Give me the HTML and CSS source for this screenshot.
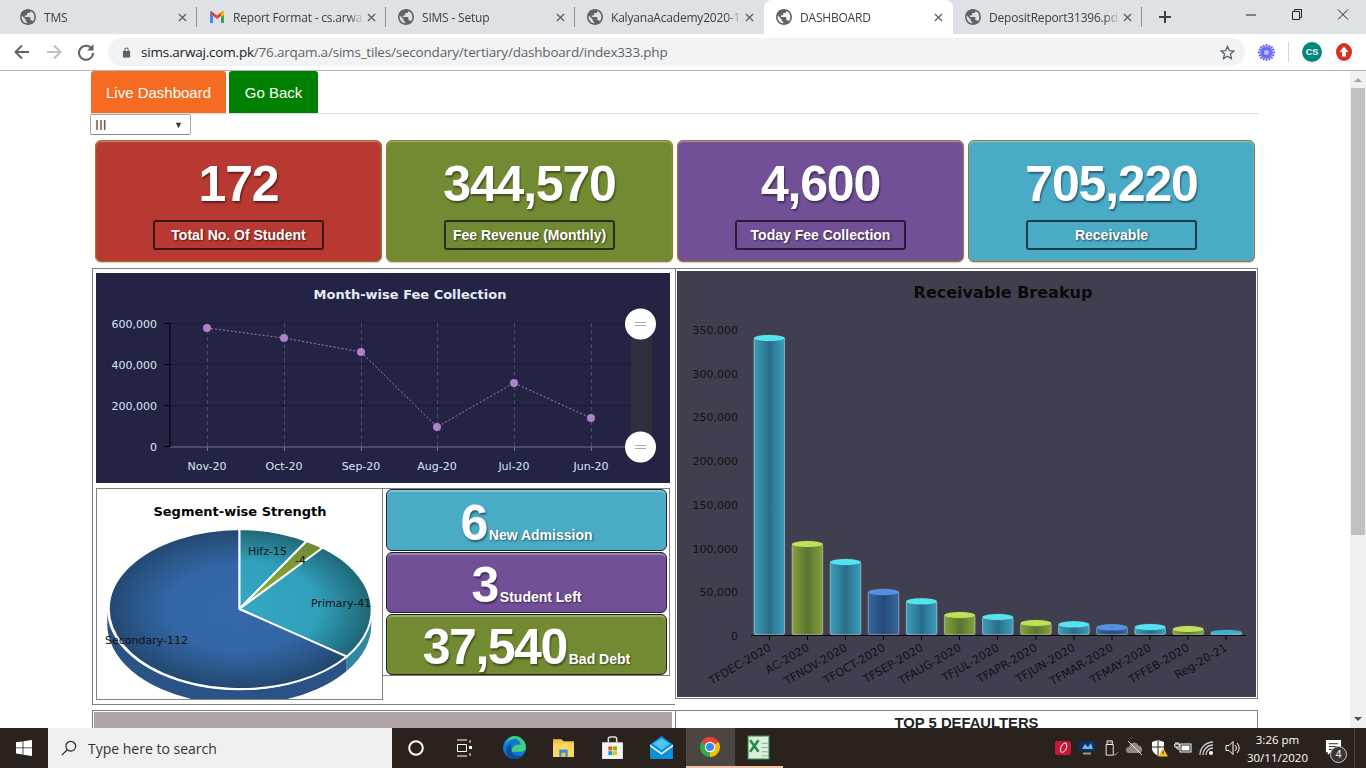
FILE: index.html
```html
<!DOCTYPE html>
<html lang="en">
<head>
<meta charset="utf-8">
<title>DASHBOARD</title>
<link rel="stylesheet" href="styles.css">
</head>
<body>
<svg class="defs" width="0" height="0" aria-hidden="true">
  <defs>
    <symbol id="globe" viewBox="2 2 20 20"><path fill="#5f6368" d="M12 2C6.48 2 2 6.48 2 12s4.48 10 10 10 10-4.48 10-10S17.52 2 12 2zm-1 17.93c-3.95-.49-7-3.85-7-7.93 0-.62.08-1.21.21-1.79L9 15v1c0 1.1.9 2 2 2v1.93zm6.9-2.54c-.26-.81-1-1.39-1.9-1.39h-1v-3c0-.55-.45-1-1-1H8v-2h2c.55 0 1-.45 1-1V7h2c1.1 0 2-.9 2-2v-.41c2.93 1.19 5 4.06 5 7.41 0 2.08-.8 3.97-2.1 5.39z"/></symbol>
    <symbol id="close" viewBox="0 0 10 10"><path d="M1 1l8 8M9 1l-8 8" stroke="#5f6368" stroke-width="1.5" fill="none"/></symbol>
    <linearGradient id="tealBar" x1="0" x2="1" y1="0" y2="0"><stop offset="0" stop-color="#3b9fbb"/><stop offset=".5" stop-color="#2a6d88"/><stop offset="1" stop-color="#3b9fbb"/></linearGradient>
    <linearGradient id="greenBar" x1="0" x2="1" y1="0" y2="0"><stop offset="0" stop-color="#85a23c"/><stop offset=".5" stop-color="#5c7230"/><stop offset="1" stop-color="#85a23c"/></linearGradient>
    <linearGradient id="blueBar" x1="0" x2="1" y1="0" y2="0"><stop offset="0" stop-color="#37689f"/><stop offset=".5" stop-color="#244a7a"/><stop offset="1" stop-color="#37689f"/></linearGradient>
    <radialGradient id="bluePie" gradientUnits="userSpaceOnUse" cx="239" cy="609" r="132" gradientTransform="translate(0 243) scale(1 .6)"><stop offset="0" stop-color="#3568a8"/><stop offset=".55" stop-color="#3366a5"/><stop offset="1" stop-color="#234870"/></radialGradient>
    <radialGradient id="tealPie" gradientUnits="userSpaceOnUse" cx="239" cy="609" r="132" gradientTransform="translate(0 243) scale(1 .6)"><stop offset="0" stop-color="#34a8c4"/><stop offset=".6" stop-color="#30a0bb"/><stop offset="1" stop-color="#1f6675"/></radialGradient>
    <radialGradient id="greenPie" gradientUnits="userSpaceOnUse" cx="239" cy="609" r="132" gradientTransform="translate(0 243) scale(1 .6)"><stop offset="0" stop-color="#95b53e"/><stop offset="1" stop-color="#6f8a30"/></radialGradient>
  </defs>
</svg>

<header class="chrome">
  <div class="tabstrip">
    <div class="tab"><svg class="fav"><use href="#globe"/></svg><span class="tab-title">TMS</span><svg class="tab-x"><use href="#close"/></svg></div>
    <div class="tab"><svg class="fav" viewBox="0 0 16 16"><path d="M1 3v11h3V7l4 3 4-3v7h3V3l-1.500-1L8 6.500 2.500 2z" fill="#ea4335"/><path d="M1 3.500V14h3V6z" fill="#4285f4"/><path d="M12 6v8h3V3.500z" fill="#34a853"/><path d="M15 3.500V6l-3 2V4l1.500-2z" fill="#fbbc04"/></svg><span class="tab-title">Report Format - cs.arwa</span><svg class="tab-x"><use href="#close"/></svg></div>
    <div class="tab"><svg class="fav"><use href="#globe"/></svg><span class="tab-title">SIMS - Setup</span><svg class="tab-x"><use href="#close"/></svg></div>
    <div class="tab tab-before-active"><svg class="fav"><use href="#globe"/></svg><span class="tab-title">KalyanaAcademy2020-1</span><svg class="tab-x"><use href="#close"/></svg></div>
    <div class="tab tab-active"><svg class="fav"><use href="#globe"/></svg><span class="tab-title">DASHBOARD</span><svg class="tab-x"><use href="#close"/></svg></div>
    <div class="tab"><svg class="fav"><use href="#globe"/></svg><span class="tab-title">DepositReport31396.pd</span><svg class="tab-x"><use href="#close"/></svg></div>
    <svg class="newtab" viewBox="0 0 12 12"><path d="M6 0v12M0 6h12" stroke="#3c4043" stroke-width="2"/></svg>
    <div class="winctl">
      <svg viewBox="0 0 46 30" class="winbtn"><path d="M18 15h10" stroke="#222" stroke-width="1"/></svg>
      <svg viewBox="0 0 46 30" class="winbtn"><path d="M18.500 11.500h7v8h-7zM20.500 11.500v-2h7v8h-2" stroke="#222" fill="none"/></svg>
      <svg viewBox="0 0 46 30" class="winbtn"><path d="M18 9.500l10 10M28 9.500l-10 10" stroke="#222" fill="none"/></svg>
    </div>
  </div>
  <div class="toolbar">
    <svg class="nav-ico" viewBox="0 0 32 34"><path d="M23 17H10M16 10.500L9.500 17l6.500 6.500" stroke="#5f6368" stroke-width="2" fill="none"/></svg>
    <svg class="nav-ico" viewBox="0 0 32 34"><path d="M9 17h13M16 10.500l6.500 6.500-6.500 6.500" stroke="#bdc1c6" stroke-width="2" fill="none"/></svg>
    <svg class="nav-ico nav-reload" viewBox="0 0 32 34"><path d="M21.500 13.500A7 7 0 1 0 23 18" stroke="#5f6368" stroke-width="2" fill="none"/><path d="M23.500 9v6.500H17z" fill="#5f6368"/></svg>
    <div class="omnibox">
      <svg class="lock" viewBox="0 0 10 12"><path d="M2.500 5V3.500a2.500 2.500 0 0 1 5 0V5h1.500v7H1V5zM3.700 5h2.600V3.500a1.300 1.300 0 0 0-2.600 0z" fill="#5f6368"/></svg>
      <span class="url"><span class="url-host">sims.arwaj.com.pk</span>/76.arqam.a/sims_tiles/secondary/tertiary/dashboard/index333.php</span>
      <svg class="star" viewBox="0 0 16 16"><path d="M8 1.500l2 4.500 4.800.5-3.600 3.200 1 4.800L8 12l-4.200 2.500 1-4.800L1.200 6.500 6 6z" stroke="#5f6368" stroke-width="1.400" fill="none"/></svg>
    </div>
    <svg class="ext" viewBox="0 0 18 18"><g stroke="#6a6cf5" stroke-width="2"><path d="M9 0v18M0 9h18M2.600 2.600l12.800 12.800M15.400 2.600L2.600 15.400M5.500 .8l7 16.400M12.500 .8l-7 16.400M.8 5.500l16.400 7M.8 12.500l16.400-7"/></g><circle cx="9" cy="9" r="2.500" fill="#fff"/><circle cx="9" cy="9" r="2.500" fill="#8a8cf8" opacity=".6"/></svg>
    <span class="tb-sep"></span>
    <span class="avatar">CS</span>
    <svg class="upd" viewBox="0 0 16 18"><ellipse cx="8" cy="9" rx="8" ry="9" fill="#d93025"/><path d="M8 3.500L12.500 9H10v4.500H6V9H3.500z" fill="#fff"/></svg>
  </div>
</header>

<div class="viewport">
  <main class="content">
    <nav class="navtabs">
      <a class="navtab navtab-live">Live Dashboard</a>
      <a class="navtab navtab-back">Go Back</a>
    </nav>
    <div class="selectbox"><span class="select-value">III</span><span class="select-arrow">▼</span></div>

    <section class="cards">
      <div class="card card-red"><div class="card-num">172</div><div class="card-label">Total No. Of Student</div></div>
      <div class="card card-green"><div class="card-num">344,570</div><div class="card-label">Fee Revenue (Monthly)</div></div>
      <div class="card card-purple"><div class="card-num">4,600</div><div class="card-label">Today Fee Collection</div></div>
      <div class="card card-teal"><div class="card-num">705,220</div><div class="card-label">Receivable</div></div>
    </section>

    <section class="grid-main">
      <div class="left-box">
        <div class="line-chart">
          <svg class="fill-svg chart-text" viewBox="96 273 574 210">
            <text x="410" y="299" text-anchor="middle" class="t-title-light">Month-wise Fee Collection</text>
            <g stroke="#1b1b38"><path d="M170 323.500H631M170 364.500H631M170 405.500H631"/></g>
            <g stroke="#4b4b62" stroke-dasharray="4 3"><path d="M207.500 323V447M284.500 323V447M361.500 323V447M437.500 323V447M514.500 323V447M591.500 323V447"/></g>
            <rect x="631" y="323" width="21" height="124" fill="#2f2f40"/>
            <path d="M170 447H631" stroke="#77778a"/>
            <path d="M170 323V447M164 323.500H170M164 364.500H170M164 405.500H170M164 446.500H170" stroke="#000" fill="none"/>
            <path d="M207.500 447v4M284.500 447v4M361.500 447v4M437.500 447v4M514.500 447v4M591.500 447v4" stroke="#77778a"/>
            <g class="t-light" text-anchor="end">
              <text x="157" y="328">600,000</text><text x="157" y="369">400,000</text><text x="157" y="410">200,000</text><text x="157" y="451">0</text>
            </g>
            <g class="t-light" text-anchor="middle">
              <text x="207" y="470">Nov-20</text><text x="284" y="470">Oct-20</text><text x="361" y="470">Sep-20</text><text x="437" y="470">Aug-20</text><text x="514" y="470">Jul-20</text><text x="591" y="470">Jun-20</text>
            </g>
            <path d="M207 328L284 338L361 352L437 427L514 383L591 418" stroke="#a67cc0" stroke-dasharray="2 2" fill="none"/>
            <g fill="#ad82c8"><circle cx="207" cy="328" r="4"/><circle cx="284" cy="338" r="4"/><circle cx="361" cy="352" r="4"/><circle cx="437" cy="427" r="4"/><circle cx="514" cy="383" r="4"/><circle cx="591" cy="418" r="4"/></g>
            <g><circle cx="640.500" cy="324" r="15.500" fill="#fff"/><path d="M635 322.500h11M635 325.500h11" stroke="#aaa"/><circle cx="640.500" cy="447" r="15.500" fill="#fff"/><path d="M635 445.500h11M635 448.500h11" stroke="#aaa"/></g>
          </svg>
        </div>
        <div class="lower-row">
          <div class="pie-box">
            <svg class="fill-svg chart-text" viewBox="97 489 285 210">
              <path d="M107.300 609 A132 80 0 0 0 346.700 656.700 L346.700 671 A132 80 0 0 1 107.300 623Z" fill="#2a5285"/>
              <path d="M346.700 656.700 A132 80 0 0 0 371.300 609 L371.300 623 A132 80 0 0 1 346.700 671Z" fill="#2f87a0"/>
              <g stroke="#fff" stroke-width="2" stroke-linejoin="round">
                <path d="M239.300 609 L239.300 529 A132 80 0 0 1 306.700 541Z" fill="url(#tealPie)"/>
                <path d="M239.300 609 L306.700 541 A132 80 0 0 1 322.700 547.700Z" fill="url(#greenPie)"/>
                <path d="M239.300 609 L322.700 547.700 A132 80 0 0 1 346.700 656.700Z" fill="url(#tealPie)"/>
                <path d="M239.300 609 L346.700 656.700 A132 80 0 1 1 239.300 529Z" fill="url(#bluePie)"/>
              </g>
              <text x="240" y="516" text-anchor="middle" class="t-title-dark">Segment-wise Strength</text>
              <g class="t-dark">
                <text x="248" y="555">Hifz-15</text><text x="295" y="564">-4</text><text x="311" y="607">Primary-41</text><text x="105" y="644">Secondary-112</text>
              </g>
            </svg>
          </div>
          <div class="kpi-box">
            <div class="kpi kpi-teal"><span class="kpi-num">6</span><span class="kpi-label">New Admission</span></div>
            <div class="kpi kpi-purple"><span class="kpi-num">3</span><span class="kpi-label">Student Left</span></div>
            <div class="kpi kpi-green"><span class="kpi-num">37,540</span><span class="kpi-label">Bad Debt</span></div>
          </div>
        </div>
      </div>

      <div class="right-box">
        <div class="bar-chart">
          <svg class="fill-svg chart-text" viewBox="677 271 579 426">
            <text x="1003" y="298" text-anchor="middle" class="t-title-bar">Receivable Breakup</text>
            <g class="t-dark" text-anchor="end">
              <text x="738" y="334">350,000</text><text x="738" y="378">300,000</text><text x="738" y="421">250,000</text><text x="738" y="465">200,000</text><text x="738" y="509">150,000</text><text x="738" y="553">100,000</text><text x="738" y="596">50,000</text><text x="738" y="640">0</text>
            </g>
            <g class="bar-body">
              <rect x="754" y="337.700" width="30.600" height="297" rx="2" fill="url(#tealBar)"/>
              <rect x="792.100" y="543.700" width="30.600" height="91" rx="2" fill="url(#greenBar)"/>
              <rect x="830.200" y="561.700" width="30.600" height="73" rx="2" fill="url(#tealBar)"/>
              <rect x="868.200" y="591.700" width="30.600" height="43" rx="2" fill="url(#blueBar)"/>
              <rect x="906.300" y="601" width="30.600" height="33.700" rx="2" fill="url(#tealBar)"/>
              <rect x="944.400" y="614.700" width="30.600" height="20" rx="2" fill="url(#greenBar)"/>
              <rect x="982.500" y="616.700" width="30.600" height="18" rx="2" fill="url(#tealBar)"/>
              <rect x="1020.600" y="622.700" width="30.600" height="12" rx="2" fill="url(#greenBar)"/>
              <rect x="1058.600" y="624" width="30.600" height="10.700" rx="2" fill="url(#tealBar)"/>
              <rect x="1096.700" y="627" width="30.600" height="7.700" rx="2" fill="url(#blueBar)"/>
              <rect x="1134.800" y="626.700" width="30.600" height="8" rx="2" fill="url(#tealBar)"/>
              <rect x="1172.900" y="628.700" width="30.600" height="6" rx="2" fill="url(#greenBar)"/>
              <rect x="1211" y="632.300" width="30.600" height="2.400" rx="1" fill="url(#tealBar)"/>
            </g>
            <g class="bar-cap">
              <ellipse cx="769.300" cy="338" rx="15.300" ry="3" fill="#4fe6f4"/>
              <ellipse cx="807.400" cy="544" rx="15.300" ry="3" fill="#bfe252"/>
              <ellipse cx="845.500" cy="562" rx="15.300" ry="3" fill="#4fe6f4"/>
              <ellipse cx="883.500" cy="592" rx="15.300" ry="3" fill="#4f90e8"/>
              <ellipse cx="921.600" cy="601.300" rx="15.300" ry="3" fill="#4fe6f4"/>
              <ellipse cx="959.700" cy="615" rx="15.300" ry="3" fill="#bfe252"/>
              <ellipse cx="997.800" cy="617" rx="15.300" ry="3" fill="#4fe6f4"/>
              <ellipse cx="1035.900" cy="623" rx="15.300" ry="3" fill="#bfe252"/>
              <ellipse cx="1073.900" cy="624.300" rx="15.300" ry="3" fill="#4fe6f4"/>
              <ellipse cx="1112" cy="627.300" rx="15.300" ry="3" fill="#4f90e8"/>
              <ellipse cx="1150.100" cy="627" rx="15.300" ry="3" fill="#4fe6f4"/>
              <ellipse cx="1188.200" cy="629" rx="15.300" ry="3" fill="#bfe252"/>
              <ellipse cx="1226.300" cy="632.500" rx="15.300" ry="2.500" fill="#38b4cf"/>
            </g>
            <path d="M751 635.500H1246M769.500 635v5M807.500 635v5M845.500 635v5M883.500 635v5M921.500 635v5M959.500 635v5M997.500 635v5M1036 635v5M1074 635v5M1112 635v5M1150 635v5M1188 635v5M1226 635v5" stroke="#000" fill="none"/>
            <g class="t-dark t-xlabel" text-anchor="end">
              <text transform="translate(772 650) rotate(-30)">TFDEC-2020</text>
              <text transform="translate(810 650) rotate(-30)">AC-2020</text>
              <text transform="translate(848 650) rotate(-30)">TFNOV-2020</text>
              <text transform="translate(886 650) rotate(-30)">TFOCT-2020</text>
              <text transform="translate(924 650) rotate(-30)">TFSEP-2020</text>
              <text transform="translate(962 650) rotate(-30)">TFAUG-2020</text>
              <text transform="translate(1000 650) rotate(-30)">TFJUL-2020</text>
              <text transform="translate(1038 650) rotate(-30)">TFAPR-2020</text>
              <text transform="translate(1076 650) rotate(-30)">TFJUN-2020</text>
              <text transform="translate(1114 650) rotate(-30)">TFMAR-2020</text>
              <text transform="translate(1152 650) rotate(-30)">TFMAY-2020</text>
              <text transform="translate(1190 650) rotate(-30)">TFFEB-2020</text>
              <text transform="translate(1228 650) rotate(-30)">Reg-20-21</text>
            </g>
          </svg>
        </div>
      </div>
    </section>

    <section class="grid-bottom">
      <div class="bottom-left"><div class="bottom-fill"></div></div>
      <div class="bottom-right"><h3 class="defaulters">TOP 5 DEFAULTERS</h3></div>
    </section>
  </main>
  <aside class="scrollbar">
    <span class="sb-up"></span>
    <span class="sb-thumb"></span>
    <span class="sb-down"></span>
  </aside>
</div>

<footer class="taskbar">
  <div class="start"><svg viewBox="0 0 16 16" class="win-logo"><path d="M0 2.300L6.600 1.400V7.500H0zM7.400 1.300L16 0V7.500H7.400zM0 8.300H6.600V14.500L0 13.600zM7.400 8.300H16V16L7.400 14.700z" fill="#fff"/></svg></div>
  <div class="search"><svg class="mag" viewBox="0 0 18 18"><circle cx="11" cy="7" r="5.500" stroke="#222" stroke-width="1.300" fill="none"/><path d="M7 11l-6 6" stroke="#222" stroke-width="1.300"/></svg><span class="search-text">Type here to search</span></div>
  <div class="slot"><svg class="ico16" viewBox="0 0 16 16"><circle cx="8" cy="8" r="6.800" stroke="#fff" stroke-width="2" fill="none"/></svg></div>
  <div class="slot"><svg class="ico18" viewBox="0 0 18 18"><path d="M2 1h10M2 17h10M2.500 5.500h9v7h-9z M15 1v3M15 14v3" stroke="#fff" fill="none"/><rect x="14" y="7" width="3" height="3" fill="#fff"/></svg></div>
  <div class="apps">
    <div class="app"><svg class="ico26" viewBox="0 0 24 24"><circle cx="12" cy="12" r="11" fill="#0f78d4"/><path d="M12 1a11 11 0 0 1 11 11c0 3-2.500 4-5 4H9c0-4 3-7 7-7 1 0 2 .2 2 .2C17 5 14 3.500 11 4 7 4.500 4 7 3 10c1-5 5-9 9-9z" fill="#3fd07d"/><path d="M9 14c0 4 3 6 6 6 2 0 3-.5 4-1-2 3-5 4-7 4-5 0-8-4-8-8 0-3 2-6 5-7-.5 2-.2 4 0 6z" fill="#0c4d9c"/></svg></div>
    <div class="app"><svg class="ico26" viewBox="0 0 24 24"><path d="M2 4h8l2 2h10v15H2z" fill="#f4c441"/><path d="M2 8h20v13H2z" fill="#fcd765"/><rect x="8" y="14" width="8" height="7" fill="#2f8fd8"/><rect x="10" y="17" width="4" height="4" fill="#f4c441"/></svg></div>
    <div class="app"><svg class="ico26" viewBox="0 0 24 24"><path d="M8 7V4a2 2 0 0 1 2-2h4a2 2 0 0 1 2 2v3" stroke="#ddd" stroke-width="1.500" fill="none"/><rect x="2" y="7" width="20" height="16" fill="#f5f5f5"/><rect x="8" y="11" width="3.800" height="3.800" fill="#f25022"/><rect x="12.500" y="11" width="3.800" height="3.800" fill="#7fba00"/><rect x="8" y="15.500" width="3.800" height="3.800" fill="#00a4ef"/><rect x="12.500" y="15.500" width="3.800" height="3.800" fill="#ffb900"/></svg></div>
    <div class="app"><svg class="ico26" viewBox="0 0 24 24"><path d="M12 1L23 9v14H1V9z" fill="#0a8fdc"/><path d="M1 9l11 8 11-8v2L12 19 1 11z" fill="#e8f6fd"/><path d="M4 8.500L12 3l8 5.500-8 6z" fill="#50c4f3"/></svg></div>
    <div class="app app-active"><svg class="ico24" viewBox="0 0 24 24"><path d="M12 12L3.340 7A10 10 0 0 1 20.660 7Z" fill="#ea4335"/><path d="M12 12L20.660 7A10 10 0 0 1 12 22Z" fill="#fbbc04"/><path d="M12 12L12 22A10 10 0 0 1 3.340 7Z" fill="#34a853"/><circle cx="12" cy="12" r="5.200" fill="#fff"/><circle cx="12" cy="12" r="4" fill="#4285f4"/></svg></div>
    <div class="app app-open"><svg class="ico26" viewBox="0 0 24 24"><rect x="2" y="1" width="20" height="22" fill="#dcefdc" stroke="#3f9a5f"/><path d="M15 8h6M15 12h6M15 16h6M15 20h6" stroke="#7fbf8f"/><path d="M4 5l8 11M12 5L4 16" stroke="#1e8e48" stroke-width="2.500"/></svg></div>
  </div>
  <div class="tray">
    <div class="tray-item"><svg class="ico16" viewBox="0 0 16 16"><rect width="16" height="14" y="1" rx="2" fill="#c8153a"/><path d="M11 3C7 3 4.500 8 6 12.500M11 3c1.500 4 .5 8-4 9.500" stroke="#fff" fill="none"/></svg></div>
    <div class="tray-item"><svg class="ico16" viewBox="0 0 16 16"><rect x="0" y="1" width="16" height="10" fill="#0d2f66"/><path d="M3 9l3-5 3 3 3-4 2 6z" fill="#6fb4ea"/><path d="M4 13.500h8" stroke="#999" stroke-width="2"/></svg></div>
    <div class="tray-item"><svg class="ico16" viewBox="0 0 16 18"><path d="M3.500 1h6v4h-6zM2.500 5h8v12h-8z" stroke="#fff" fill="none"/><path d="M5 2.500h1M7.500 2.500h1" stroke="#fff"/><path d="M11 16l1.500 1 3-3" stroke="#bbb" fill="none"/></svg></div>
    <div class="tray-item"><svg class="ico18" viewBox="0 0 18 16"><path d="M3 13a3 3 0 0 1 0-6 5 5 0 0 1 9.500-1.500A4 4 0 0 1 14 13z" fill="#8f8a85"/><path d="M2 1l14 14" stroke="#e8e8e8" stroke-width="1"/></svg></div>
    <div class="tray-item"><svg class="ico18" viewBox="0 0 18 18"><path d="M8 1l6 2v6c0 4-3 6-6 8-3-2-6-4-6-8V3z" fill="#fff"/><path d="M8 1v16M2 8h12" stroke="#2a221c"/><path d="M13 9l5 8.500H8z" fill="#fcc419"/><path d="M13 12v3" stroke="#222"/></svg></div>
    <div class="tray-item"><svg class="ico18" viewBox="0 0 18 14"><rect x="6" y="3" width="11" height="8" stroke="#fff" fill="none"/><rect x="7.500" y="4.500" width="8" height="5" fill="#fff"/><path d="M2 1v2M4 1v2M.8 3h4.400v3H.8zM3 6v2h3" stroke="#fff" fill="none"/></svg></div>
    <div class="tray-item"><svg class="ico16" viewBox="0 0 16 16"><g stroke="#ccc" stroke-width="1.300" fill="none"><path d="M1 15A13 13 0 0 1 14 2"/><path d="M4 15A10 10 0 0 1 14 5"/><path d="M7 15A7 7 0 0 1 14 8"/></g><circle cx="12" cy="13" r="2" fill="#fff"/></svg></div>
    <div class="tray-item tray-vol"><svg class="ico16" viewBox="0 0 16 16"><path d="M1 5.500h3l4-4v13l-4-4H1z" stroke="#fff" fill="none"/><path d="M10 5a4 4 0 0 1 0 6M12 3a7 7 0 0 1 0 10" stroke="#fff" fill="none"/></svg></div>
  </div>
  <div class="clock"><span>3:26 pm</span><span>30/11/2020</span></div>
  <div class="notify"><svg class="note-ico" viewBox="0 0 18 18"><path d="M1 1h16v13H6l-3 3v-3H1z" fill="#fff"/><path d="M4 5h10M4 8h10M4 11h6" stroke="#2a221c"/></svg><span class="badge">4</span></div>
  <div class="showdesk"></div>
</footer>
</body>
</html>
```

FILE: styles.css
```css
* { box-sizing: border-box; }
html, body { margin: 0; padding: 0; height: 100%; }
body {
  width: 1366px;
  height: 768px;
  overflow: hidden;
  display: flex;
  flex-direction: column;
  font-family: "Liberation Sans", Arial, sans-serif;
  background: #fff;
}
.defs { position: absolute; }

/* Browser chrome */
.chrome { flex: none; height: 71px; border-bottom: 1px solid #b4b6b8; }
.tabstrip { height: 34px; background: #dee1e6; display: flex; padding-left: 8px; align-items: stretch; }
.tab {
  width: 189px;
  display: flex;
  align-items: center;
  padding-left: 12px;
  position: relative;
  font: 12px "Open Sans", "Noto Sans", sans-serif;
  letter-spacing: -0.200px;
  color: #3c4043;
}
.tab::after {
  content: "";
  position: absolute;
  right: 0;
  top: 7px;
  height: 20px;
  width: 1px;
  background: #8d9094;
}
.tab-before-active::after, .tab-active::after { display: none; }
.tab-active { background: #fff; border-radius: 8px 8px 0 0; }
.fav { width: 16px; height: 16px; flex: none; }
.tab-title {
  margin-left: 8px;
  width: 131px;
  white-space: nowrap;
  -webkit-mask-image: linear-gradient(to right, #000 88%, transparent 100%);
  mask-image: linear-gradient(to right, #000 88%, transparent 100%);
}
.tab-x { width: 9px; height: 9px; margin-left: 3px; flex: none; }
.newtab { width: 12px; height: 12px; margin: 11px 0 0 17px; flex: none; }
.winctl { margin-left: auto; display: flex; align-items: flex-start; }
.winbtn { width: 46px; height: 30px; display: block; }
.toolbar { height: 36px; display: flex; align-items: center; padding-left: 6px; background: #fff; }
.nav-ico { width: 32px; height: 34px; flex: none; }
.nav-reload { margin-right: 6px; }
.omnibox {
  width: 1137px;
  height: 28px;
  border-radius: 14px;
  background: #f1f3f4;
  display: flex;
  align-items: center;
  padding-left: 14px;
  font: 13.500px "Open Sans", "Noto Sans", sans-serif;
  color: #5f6368;
}
.lock { width: 9px; height: 12px; flex: none; }
.url { margin-left: 10px; white-space: nowrap; letter-spacing: -0.200px; }
.url-host { color: #202124; }
.star { width: 15px; height: 15px; margin-left: auto; margin-right: 10px; flex: none; }
.ext { width: 17px; height: 17px; margin-left: 13px; flex: none; }
.tb-sep { width: 1px; height: 20px; background: #d5d7da; margin-left: 13px; }
.avatar {
  width: 20px; height: 20px; border-radius: 50%;
  margin-left: 13px;
  background: #00897b; color: #fff;
  font: bold 9px/20px "Liberation Sans", sans-serif;
  text-align: center;
}
.upd { width: 16px; height: 18px; margin-left: 14px; flex: none; }

/* Viewport */
.viewport { flex: 1; min-height: 0; display: flex; }
.content { width: 1350px; overflow: hidden; padding-left: 91px; }
.scrollbar {
  width: 16px;
  background: #f1f1f1;
  display: flex;
  flex-direction: column;
  align-items: center;
}
.sb-up {
  margin-top: 7px;
  border-left: 4px solid transparent; border-right: 4px solid transparent;
  border-bottom: 4px solid #a3a3a3;
}
.sb-thumb { width: 14px; height: 447px; background: #c1c1c1; margin-top: 6px; }
.sb-down {
  margin-top: auto; margin-bottom: 7px;
  border-left: 4px solid transparent; border-right: 4px solid transparent;
  border-top: 4px solid #505050;
}

.navtabs { width: 1168px; height: 43px; display: flex; gap: 3px; border-bottom: 1px solid #ddd; }
.navtab {
  height: 42px;
  border-radius: 3px 3px 0 0;
  color: #fff;
  font-size: 15px;
  line-height: 43px;
  text-align: center;
}
.navtab-live { width: 135px; background: #f66b22; }
.navtab-back { width: 89px; background: #008000; }
.selectbox {
  width: 101px;
  height: 21px;
  margin-left: -1px;
  border: 1px solid #a9a9a9;
  border-bottom-color: #888;
  border-radius: 2px;
  display: flex;
  align-items: center;
  justify-content: space-between;
  padding: 0 7px 0 4px;
  font-size: 14px;
}
.select-value { color: #6a3a2a; }
.select-arrow { font-size: 9px; color: #333; }

/* Top stat cards */
.cards { display: flex; gap: 4px; margin-top: 5px; padding-left: 4px; }
.card {
  width: 287px;
  height: 122px;
  border: 1px solid #a2742c;
  border-radius: 6px;
  box-shadow: inset 0 1px 1px rgba(255,255,255,.35), 0 1px 1px rgba(0,0,0,.2);
  display: flex;
  flex-direction: column;
  align-items: center;
  color: #fff;
}
.card-red { background: #b83832; }
.card-green { background: #728b33; }
.card-purple { background: #725098; }
.card-teal { background: #4aabc6; }
.card-num {
  font-size: 50px;
  font-weight: bold;
  line-height: 50px;
  margin-top: 18px;
  letter-spacing: -1.200px;
  text-shadow: 1px 2px 2px rgba(0,0,0,.45);
}
.card-label {
  width: 171px;
  height: 30px;
  margin-top: 11px;
  border: 2px solid rgba(0,0,0,.65);
  border-radius: 3px;
  font-size: 14px;
  font-weight: bold;
  line-height: 26px;
  text-align: center;
  text-shadow: 1px 1px 2px rgba(0,0,0,.6);
}

/* Main grid */
.grid-main { display: flex; align-items: flex-start; margin: 6px 0 0 1px; }
.left-box {
  width: 583px;
  height: 437px;
  border: 1px solid #808080;
  border-right: 0;
  padding: 4px 0 0 3px;
}
.line-chart { width: 574px; height: 210px; background: #232344; }
.fill-svg { display: block; width: 100%; height: 100%; }
.chart-text { font-family: "DejaVu Sans", Verdana, sans-serif; font-size: 11px; }
.t-title-light { font-weight: bold; font-size: 13px; fill: #e3ecf5; }
.t-title-dark { font-weight: bold; font-size: 13px; fill: #000; }
.t-title-bar { font-weight: bold; font-size: 16px; fill: #0a0a0a; }
.t-light text { fill: #dbe7f3; }
.t-dark text { fill: #111; }
.t-xlabel text { font-size: 11.300px; }
.bar-body rect { stroke: rgba(255,255,255,.4); stroke-width: 1; }
.bar-cap ellipse { stroke: rgba(255,255,255,.25); stroke-width: .5; }

.lower-row { display: flex; align-items: flex-start; margin-top: 5px; }
.pie-box { width: 287px; height: 212px; border: 1px solid #808080; }
.kpi-box {
  width: 287px;
  height: 188px;
  border: 1px solid #808080;
  border-left: 0;
  padding: 0 2px 0 3px;
  display: grid;
  grid-template-rows: 62px 61px 61px;
  row-gap: 1px;
}
.kpi {
  border: 1px solid #222;
  border-radius: 6px;
  box-shadow: inset 0 2px 1px rgba(255,255,255,.3);
  display: flex;
  align-items: flex-end;
  justify-content: center;
  color: #fff;
  font-weight: bold;
  padding-bottom: 7px;
}
.kpi-teal { background: #4aabc6; }
.kpi-purple { background: #725098; }
.kpi-green { background: #728b33; }
.kpi-num { font-size: 50px; line-height: 40px; letter-spacing: -1.500px; text-shadow: 1px 2px 2px rgba(0,0,0,.45); }
.kpi-label { font-size: 14px; line-height: 16px; margin-left: 2px; text-shadow: 1px 1px 2px rgba(0,0,0,.5); }

.right-box {
  width: 583px;
  height: 431px;
  border: 1px solid #808080;
  padding: 2px 0 0 1px;
}
.bar-chart { width: 579px; height: 426px; background: #403f4f; }

/* Bottom row */
.grid-bottom { display: flex; margin: 5px 0 0 1px; }
.bottom-left { width: 583px; height: 40px; border: 1px solid #808080; border-right: 0; padding: 1px 3px 0 1px; }
.bottom-fill { height: 100%; background: #b0a4a4; }
.bottom-right { width: 583px; height: 40px; border: 1px solid #808080; }
.defaulters { margin: 4px 0 0; font-size: 14.800px; line-height: 16px; font-weight: bold; text-align: center; color: #222; }

/* Taskbar */
.taskbar { flex: none; height: 40px; background: #2a221c; display: flex; align-items: stretch; }
.start { width: 48px; display: flex; align-items: center; justify-content: center; }
.win-logo { width: 16px; height: 16px; }
.search {
  width: 344px;
  background: #f0f0f0;
  display: flex;
  align-items: center;
  padding-left: 13px;
  color: #333;
  font: 14px "Open Sans", "Noto Sans", sans-serif;
}
.mag { width: 16px; height: 16px; }
.search-text { margin-left: 11px; }
.slot { width: 48px; display: flex; align-items: center; justify-content: center; }
.apps { display: flex; margin-left: 2.600px; }
.app { width: 48.800px; display: flex; align-items: center; justify-content: center; border-bottom: 2px solid transparent; }
.app-active { background: #4b4641; border-bottom-color: #f2c4a6; }
.app-open { border-bottom-color: #f2c4a6; }
.ico16 { width: 16px; height: 16px; }
.ico18 { width: 18px; height: 18px; }
.ico24 { width: 24px; height: 24px; }
.ico26 { width: 25px; height: 25px; }
.tray { margin-left: auto; display: flex; }
.tray-item { width: 24px; display: flex; align-items: center; justify-content: center; }
.tray-vol { padding-left: 4px; }
.clock {
  width: 69px;
  display: flex;
  flex-direction: column;
  align-items: center;
  justify-content: center;
  gap: 3px;
  color: #fff;
  font: 11.500px/15px "Open Sans", "Noto Sans", sans-serif;
}
.notify { width: 42px; position: relative; display: flex; align-items: center; justify-content: center; }
.note-ico { width: 17px; height: 17px; margin-top: -2px; }
.badge {
  position: absolute;
  left: 18px;
  top: 18px;
  width: 17px;
  height: 17px;
  border-radius: 50%;
  background: #3a3632;
  border: 1px solid #ccc;
  color: #fff;
  font-size: 11px;
  line-height: 15px;
  text-align: center;
}
.showdesk { width: 12px; border-left: 1px solid #4a433c; }
```
